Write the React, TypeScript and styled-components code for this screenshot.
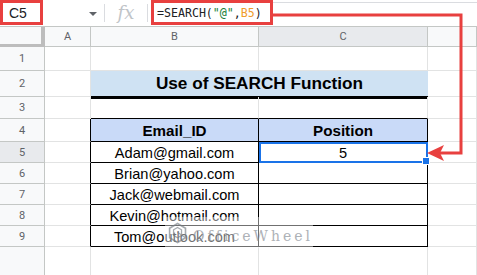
import React from "react";
import styled, { createGlobalStyle } from "styled-components";

const GlobalStyle = createGlobalStyle`
  html, body {
    margin: 0;
    padding: 0;
    background: #ffffff;
    font-family: "Liberation Sans", Arial, sans-serif;
  }
  * {
    box-sizing: border-box;
  }
`;

const RED = "#e8403f";
const GRID = "#e2e3e3";
const HEAD = "#c4c7c5";

const emails = [
  "Adam@gmail.com",
  "Brian@yahoo.com",
  "Jack@webmail.com",
  "Kevin@hotmail.com",
  "Tom@outlook.com",
];

export default function App() {
  return (
    <Page>
      <GlobalStyle />
      <Toolbar>
        <NameBox>C5</NameBox>
        <CaretArea>
          <Caret />
        </CaretArea>
        <Divider />
        <FxArea>fx</FxArea>
        <Divider />
        <FormulaBox>
          =SEARCH(<Str>"@"</Str>,<Ref>B5</Ref>)
        </FormulaBox>
        <FormulaRest />
      </Toolbar>

      <Sheet>
        <Corner />
        <ColHead>A</ColHead>
        <ColHead>B</ColHead>
        <ColHead $active>C</ColHead>
        <ColHead />

        <RowHead>1</RowHead>
        <Cell />
        <Cell />
        <Cell />
        <Cell />

        <RowHead>2</RowHead>
        <Cell />
        <Title>Use of SEARCH Function</Title>
        <Cell />

        <RowHead>3</RowHead>
        <Cell />
        <Cell $bottom="#000" />
        <Cell $bottom="#000" />
        <Cell />

        <RowHead>4</RowHead>
        <Cell $right="#000" />
        <Cell $bg="#c9daf8" $right="#000" $bottom="#000" $bold>
          Email_ID
        </Cell>
        <Cell $bg="#c9daf8" $right="#000" $bottom="#000" $bold>
          Position
        </Cell>
        <Cell />

        {emails.map((email, i) => (
          <React.Fragment key={email}>
            <RowHead $active={i === 0}>{i + 5}</RowHead>
            <Cell $right="#000" />
            <Cell $right="#000" $bottom="#000">
              {email}
            </Cell>
            {i === 0 ? (
              <Selected $right="#000" $bottom="#000">
                5
              </Selected>
            ) : (
              <Cell $right="#000" $bottom="#000" />
            )}
            <Cell />
          </React.Fragment>
        ))}

        <RowHead $last />
        <Cell $last />
        <Cell $last />
        <Cell $last />
        <Cell $last />
      </Sheet>

      <Watermark>
        <svg width="24" height="26" viewBox="0 0 24 26">
          <polygon
            points="12,1 22,7 22,19 12,25 2,19 2,7"
            fill="none"
            stroke="#8f959b"
            strokeWidth="2"
          />
          <polygon
            points="12,6 17,9 17,16 12,19 7,16 7,9"
            fill="none"
            stroke="#8f959b"
            strokeWidth="1.6"
          />
          <line x1="12" y1="12" x2="22" y2="19" stroke="#8f959b" strokeWidth="1.6" />
        </svg>
        <WatermarkText>OfficeWheel</WatermarkText>
      </Watermark>

      <Arrow width="477" height="275" viewBox="0 0 477 275">
        <path
          d="M272 15 H461 V153 H440"
          fill="none"
          stroke={RED}
          strokeWidth="3"
          strokeLinejoin="miter"
        />
        <polygon points="427,153 444,145 440,153 444,161" fill={RED} />
      </Arrow>
    </Page>
  );
}

const Page = styled.div`
  position: relative;
  width: 477px;
  height: 275px;
  overflow: hidden;
  background: #ffffff;
`;

const Toolbar = styled.div`
  display: flex;
  align-items: center;
  height: 27px;
  border-bottom: 1px solid ${HEAD};
`;

const NameBox = styled.div`
  width: 43px;
  height: 25px;
  align-self: flex-start;
  border: 3px solid ${RED};
  padding-left: 6px;
  display: flex;
  align-items: center;
  font-size: 14px;
  color: #202124;
`;

const CaretArea = styled.div`
  width: 61px;
  display: flex;
  justify-content: flex-end;
  padding-right: 7px;
`;

const Caret = styled.div`
  width: 0;
  height: 0;
  border-left: 4px solid transparent;
  border-right: 4px solid transparent;
  border-top: 4px solid #5f6368;
  margin-top: 2px;
`;

const Divider = styled.div`
  width: 1px;
  height: 18px;
  background: #dadce0;
`;

const FxArea = styled.div`
  width: 42px;
  text-align: center;
  font-family: "DejaVu Serif", "Liberation Serif", serif;
  font-style: italic;
  font-size: 18px;
  color: #c0c4c8;
  line-height: 1;
`;

const FormulaBox = styled.div`
  margin-left: 3px;
  width: 122px;
  height: 25px;
  align-self: flex-start;
  border: 3px solid ${RED};
  padding-left: 3px;
  display: flex;
  align-items: center;
  font-family: "DejaVu Sans Mono", monospace;
  font-size: 11.6px;
  color: #202124;
  white-space: nowrap;
`;

const Str = styled.span`
  color: #188038;
`;

const Ref = styled.span`
  color: #f09c2b;
`;

const FormulaRest = styled.div`
  flex: 1;
  align-self: flex-start;
  margin-top: 2px;
  border-top: 1px solid #dadce0;
`;

const Sheet = styled.div`
  display: grid;
  grid-template-columns: 45px 46px 168px 169px 1fr;
  grid-template-rows: 20px 24px 26px 22px 23px 21px 21px 21px 21px 21px 28px;
`;

const Corner = styled.div`
  background: #f8f9fa;
  border-right: 4px solid #bdbdbd;
  border-bottom: 3px solid #bdbdbd;
`;

const ColHead = styled.div<{ $active?: boolean }>`
  background: ${(p) => (p.$active ? "#e8eaed" : "#f8f9fa")};
  border-right: 1px solid ${HEAD};
  border-bottom: 1px solid ${HEAD};
  display: flex;
  align-items: center;
  justify-content: center;
  font-family: Roboto, "Liberation Sans", sans-serif;
  font-size: 11px;
  color: #5f6368;
`;

const RowHead = styled.div<{ $active?: boolean; $last?: boolean }>`
  background: ${(p) => (p.$active ? "#e8eaed" : "#f8f9fa")};
  border-right: 1px solid ${HEAD};
  border-bottom: ${(p) => (p.$last ? "none" : `1px solid ${HEAD}`)};
  display: flex;
  align-items: center;
  justify-content: center;
  font-family: Roboto, "Liberation Sans", sans-serif;
  font-size: 11px;
  color: #5f6368;
`;

const Cell = styled.div<{
  $bg?: string;
  $right?: string;
  $bottom?: string;
  $bold?: boolean;
  $last?: boolean;
}>`
  background: ${(p) => p.$bg || "transparent"};
  border-right: 1px solid ${(p) => p.$right || GRID};
  border-bottom: ${(p) => (p.$last ? "none" : `1px solid ${p.$bottom || GRID}`)};
  display: flex;
  align-items: center;
  justify-content: center;
  padding-top: 1px;
  font-size: ${(p) => (p.$bold ? "15.2px" : "14.6px")};
  font-weight: ${(p) => (p.$bold ? 700 : 400)};
  color: #000;
  white-space: nowrap;
`;

const Selected = styled(Cell)`
  position: relative;
  outline: 2px solid #1a73e8;
  outline-offset: -2px;

  &::after {
    content: "";
    position: absolute;
    right: -3px;
    bottom: -3px;
    width: 6px;
    height: 6px;
    background: #1a73e8;
    border: 1px solid #ffffff;
    z-index: 2;
  }
`;

const Title = styled.div`
  grid-column: span 2;
  background: #cfe2f3;
  border-bottom: 1px solid #000;
  box-shadow: 0 2px 0 #000;
  display: flex;
  align-items: center;
  justify-content: center;
  font-size: 17.2px;
  font-weight: 700;
  color: #000;
`;

const Watermark = styled.div`
  position: absolute;
  left: 165px;
  top: 217px;
  width: 148px;
  height: 31px;
  display: flex;
  align-items: center;
  gap: 6px;
  padding-left: 3px;
  background: rgba(255, 255, 255, 0.55);
  opacity: 0.8;
`;

const WatermarkText = styled.span`
  font-family: "DejaVu Serif", "Liberation Serif", serif;
  font-size: 14px;
  letter-spacing: 3px;
  color: #9aa0a6;
  margin-top: 6px;
`;

const Arrow = styled.svg`
  position: absolute;
  left: 0;
  top: 0;
  pointer-events: none;
`;
